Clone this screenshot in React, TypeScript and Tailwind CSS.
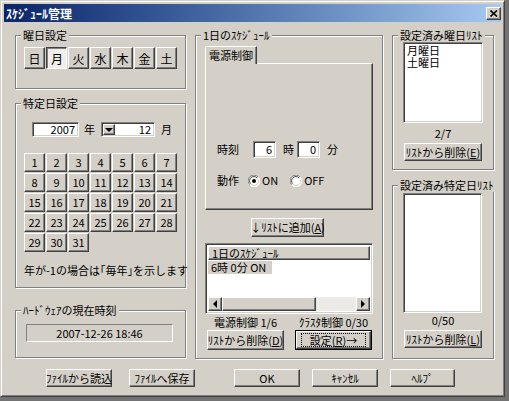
import type { ReactNode } from 'react';

const raised =
  'border border-t-white border-l-white border-r-[#404040] border-b-[#404040] shadow-[inset_-1px_-1px_0_#808080]';
const pressed =
  'border border-t-[#404040] border-l-[#404040] border-r-white border-b-white shadow-[inset_1px_1px_0_#808080]';
const sunken =
  'border border-t-[#808080] border-l-[#808080] border-r-white border-b-white shadow-[inset_1px_1px_0_#404040,inset_-1px_-1px_0_#d4d0c8]';

function Group({ label, className = '', children }: { label: string; className?: string; children?: ReactNode }) {
  return (
    <div className={`relative border border-[#808080] shadow-[inset_1px_1px_0_#fff,1px_1px_0_#fff] ${className}`}>
      <span className="absolute left-[5px] -top-[7px] px-[2px] bg-[#d4d0c8] leading-[13px] whitespace-nowrap">{label}</span>
      {children}
    </div>
  );
}

function Btn({ children, className = '', down = false }: { children: ReactNode; className?: string; down?: boolean }) {
  return (
    <button
      type="button"
      className={`flex items-center justify-center whitespace-nowrap ${down ? `${pressed} bg-[#efeeeb] pt-[1px] pl-[1px]` : `${raised} bg-[#d4d0c8]`} ${className}`}
    >
      {children}
    </button>
  );
}

function Radio({ checked }: { checked: boolean }) {
  return (
    <svg width="12" height="12" viewBox="0 0 12 12">
      <circle cx="6" cy="6" r="5.5" fill="#fff" />
      <path d="M10 2 A5.5 5.5 0 0 0 1.5 9.5" fill="none" stroke="#808080" />
      <path d="M9 3 A4.2 4.2 0 0 0 2.6 8.6" fill="none" stroke="#404040" />
      <path d="M2 10 A5.5 5.5 0 0 0 10.5 2.5" fill="none" stroke="#fff" />
      <path d="M3 9 A4.2 4.2 0 0 0 9.4 3.4" fill="none" stroke="#d4d0c8" />
      {checked && <circle cx="6" cy="6" r="2" fill="#000" />}
    </svg>
  );
}

function Arrow({ dir }: { dir: 'left' | 'right' | 'down' }) {
  const d = dir === 'left' ? 'M4 0 L0 4 L4 8 Z' : dir === 'right' ? 'M0 0 L4 4 L0 8 Z' : 'M0 0 L8 0 L4 4 Z';
  const [w, h] = dir === 'down' ? [8, 4] : [4, 8];
  return (
    <svg width={w} height={h} viewBox={`0 0 ${w} ${h}`}>
      <path d={d} fill="#000" />
    </svg>
  );
}

const weekDays = ['日', '月', '火', '水', '木', '金', '土'];
const days = Array.from({ length: 31 }, (_, i) => i + 1);

export default function App() {
  return (
    <div className="w-[509px] h-[401px] bg-[#737373] font-['Noto_Sans_CJK_JP',sans-serif] text-[11px] leading-[13px] text-black select-none">
      <div className="w-[505px] h-[397px] bg-[#d4d0c8] border border-t-[#d4d0c8] border-l-[#d4d0c8] border-r-[#404040] border-b-[#404040] shadow-[inset_1px_1px_0_#fff,inset_-1px_-1px_0_#808080] p-[3px] flex flex-col">
        {/* title bar */}
        <div className="h-[18px] flex items-center justify-between pl-[2px] bg-linear-to-r from-[#0a246a] to-[#a6caf0]">
          <span className="text-white font-bold text-[12px]">ｽｹｼﾞｭｰﾙ管理</span>
          <div className={`${raised} bg-[#d4d0c8] w-[15px] h-[13px] flex items-center justify-center`}>
            <svg width="8" height="7" viewBox="0 0 8 7">
              <path d="M0.5 0.5 L7 6.5 M7 0.5 L0.5 6.5" stroke="#000" strokeWidth="1.6" />
            </svg>
          </div>
        </div>

        <div className="flex-1 pl-[11px] pt-[13px]">
          <div className="flex gap-[9px]">
            {/* left column */}
            <div className="w-[171px] flex flex-col">
              <Group label="曜日設定" className="h-[54px] pl-[8px] pt-[11px]">
                <div className="grid grid-cols-[repeat(7,21px)] gap-x-[1px]">
                  {weekDays.map(d => (
                    <Btn key={d} down={d === '月'} className="h-[22px] text-[12px]">
                      {d}
                    </Btn>
                  ))}
                </div>
              </Group>

              <Group label="特定日設定" className="mt-[14px] h-[185px] pl-[8px] pt-[18px]">
                <div className="flex items-center ml-[8px] h-[15px]">
                  <div className={`${sunken} bg-white w-[47px] h-[15px] flex items-center justify-end pr-[3px]`}>2007</div>
                  <span className="ml-[5px]">年</span>
                  <div className={`${sunken} bg-white ml-[6px] w-[54px] h-[15px] flex items-stretch p-[1px]`}>
                    <div className={`${raised} bg-[#d4d0c8] w-[12px] flex items-center justify-center`}>
                      <Arrow dir="down" />
                    </div>
                    <div className="flex-1 flex items-center justify-end pr-[2px]">12</div>
                  </div>
                  <span className="ml-[6px]">月</span>
                </div>

                <div className="mt-[16px] grid grid-cols-[repeat(7,21px)] auto-rows-[19px] gap-[1px]">
                  {days.map(n => (
                    <Btn key={n}>{n}</Btn>
                  ))}
                </div>

                <div className="mt-[12px] pr-[8px] text-center whitespace-nowrap">年が-1の場合は｢毎年｣を示します</div>
              </Group>

              <Group label="ﾊｰﾄﾞｳｪｱの現在時刻" className="mt-[22px] h-[48px] pl-[10px] pt-[13px]">
                <div className="w-[147px] h-[18px] border border-t-[#808080] border-l-[#808080] border-r-white border-b-white flex items-center justify-center">
                  2007-12-26 18:46
                </div>
              </Group>
            </div>

            {/* middle column */}
            <Group label="1日のｽｹｼﾞｭｰﾙ" className="w-[188px] h-[324px] pl-[9px] pt-[10px]">
              <div className="relative z-10 -mb-[1px] w-[52px] h-[18px] bg-[#d4d0c8] border-t border-l border-r border-t-white border-l-white border-r-[#404040] shadow-[inset_-1px_0_0_#808080] flex items-start justify-center pt-[2px]">
                電源制御
              </div>
              <div className={`${raised} bg-[#d4d0c8] w-[168px] h-[147px] pl-[11px] pt-[77px]`}>
                <div className="flex items-center h-[17px]">
                  <span>時刻</span>
                  <div className={`${sunken} bg-white ml-[14px] w-[23px] h-[17px] flex items-center justify-end pr-[3px]`}>6</div>
                  <span className="ml-[7px]">時</span>
                  <div className={`${sunken} bg-white ml-[3px] w-[23px] h-[17px] flex items-center justify-end pr-[3px]`}>0</div>
                  <span className="ml-[7px]">分</span>
                </div>
                <div className="flex items-center h-[13px] mt-[16px]">
                  <span>動作</span>
                  <span className="ml-[9px] flex"><Radio checked /></span>
                  <span className="ml-[2px]">ON</span>
                  <span className="ml-[12px] flex"><Radio checked={false} /></span>
                  <span className="ml-[2px]">OFF</span>
                </div>
              </div>

              <Btn className="ml-[46px] mt-[8px] w-[73px] h-[19px]">
                ↓ﾘｽﾄに追加(<span className="underline">A</span>)
              </Btn>

              <div className={`${sunken} bg-white mt-[6px] w-[168px] h-[71px] p-[2px] flex flex-col`}>
                <div className={`${raised} bg-[#d4d0c8] h-[14px] flex items-center pl-[3px]`}>1日のｽｹｼﾞｭｰﾙ</div>
                <div className="h-[13px] mt-[1px] flex">
                  <span className="bg-[#d4d0c8] w-[64px] pl-[3px]">6時 0分 ON</span>
                </div>
                <div className="flex-1" />
                <div className="h-[14px] flex">
                  <div className={`${raised} bg-[#d4d0c8] w-[14px] flex items-center justify-center`}>
                    <Arrow dir="left" />
                  </div>
                  <div className={`${raised} bg-[#d4d0c8] w-[94px]`} />
                  <div className="flex-1 bg-[#ecebe7]" />
                  <div className={`${raised} bg-[#d4d0c8] w-[14px] flex items-center justify-center`}>
                    <Arrow dir="right" />
                  </div>
                </div>
              </div>

              <div className="flex mt-[2px] ml-[2px] gap-[11px]">
                <div className="w-[77px] flex flex-col items-center">
                  <span className="h-[13px] whitespace-nowrap">電源制御 1/6</span>
                  <Btn className="mt-[1px] w-[77px] h-[20px]">
                    ﾘｽﾄから削除(<span className="underline">D</span>)
                  </Btn>
                </div>
                <div className="w-[77px] flex flex-col items-center">
                  <span className="h-[13px] whitespace-nowrap">ｸﾗｽﾀ制御 0/30</span>
                  <div className="mt-[1px] w-[77px] h-[20px] border border-black flex">
                    <Btn className="flex-1">
                      <span className="outline outline-1 outline-dotted outline-[#000] px-[8px] leading-[12px]">
                        設定(<span className="underline">R</span>)→
                      </span>
                    </Btn>
                  </div>
                </div>
              </div>
            </Group>

            {/* right column */}
            <div className="w-[102px] flex flex-col">
              <Group label="設定済み曜日ﾘｽﾄ" className="h-[135px] pl-[10px] pt-[6px]">
                <div className={`${sunken} bg-white w-[80px] h-[81px] px-[3px] pt-[1px] leading-[12px]`}>
                  <div className="h-[12px]">月曜日</div>
                  <div className="h-[12px]">土曜日</div>
                </div>
                <div className="w-[80px] text-center mt-[4px]">2/7</div>
                <Btn className="mt-[3px] ml-[1px] w-[78px] h-[18px]">
                  ﾘｽﾄから削除(<span className="underline">E</span>)
                </Btn>
              </Group>

              <Group label="設定済み特定日ﾘｽﾄ" className="mt-[15px] h-[174px] pl-[10px] pt-[7px]">
                <div className={`${sunken} bg-white w-[79px] h-[120px]`} />
                <div className="w-[80px] text-center mt-[1px]">0/50</div>
                <Btn className="mt-[3px] ml-[1px] w-[78px] h-[18px]">
                  ﾘｽﾄから削除(<span className="underline">L</span>)
                </Btn>
              </Group>
            </div>
          </div>

          {/* bottom buttons */}
          <div className="flex mt-[10px] ml-[31px]">
            <Btn className="w-[66px] h-[18px]">ﾌｧｲﾙから読込</Btn>
            <Btn className="ml-[17px] w-[66px] h-[18px]">ﾌｧｲﾙへ保存</Btn>
            <Btn className="ml-[39px] w-[66px] h-[18px]">OK</Btn>
            <Btn className="ml-[12px] w-[66px] h-[18px]">ｷｬﾝｾﾙ</Btn>
            <Btn className="ml-[12px] w-[65px] h-[18px]">ﾍﾙﾌﾟ</Btn>
          </div>
        </div>
      </div>
    </div>
  );
}
